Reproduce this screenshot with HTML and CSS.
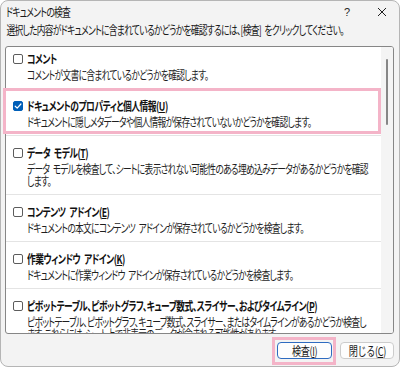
FILE: index.html
```html
<!DOCTYPE html>
<html lang="ja">
<head>
<meta charset="utf-8">
<title>ドキュメントの検査</title>
<link rel="stylesheet" href="styles.css">
</head>
<body>
<div class="window">
  <header class="titlebar">
    <span class="title sq">ドキュメントの検査</span>
    <div class="caption-btns">
      <span class="cap cap-help">?</span>
      <span class="cap cap-close"><svg width="10" height="10" viewBox="0 0 10 10"><path d="M1 1L9 9M9 1L1 9" stroke="#1f1f1f" stroke-width="1" fill="none"/></svg></span>
    </div>
  </header>
  <p class="instruction sq">選択した内容がドキュメントに含まれているかどうかを確認するには、[検査] をクリックしてください。</p>
  <div class="listbox">
    <div class="items">
      <div class="item">
        <div class="head"><span class="cb"></span><span class="label sq">コメント</span></div>
        <div class="desc sq">コメントが文書に含まれているかどうかを確認します。</div>
      </div>
      <div class="item">
        <div class="head"><span class="cb checked"><svg width="10" height="10" viewBox="0 0 10 10"><path d="M2.2 5.2L4.2 7.1L7.9 3" stroke="#fff" stroke-width="1.2" fill="none" stroke-linecap="round" stroke-linejoin="round"/></svg></span><span class="label sq">ドキュメントのプロパティと個人情報(<u>U</u>)</span></div>
        <div class="desc sq">ドキュメントに隠しメタデータや個人情報が保存されていないかどうかを確認します。</div>
      </div>
      <div class="item">
        <div class="head"><span class="cb"></span><span class="label sq">データ モデル(<u>T</u>)</span></div>
        <div class="desc sq">データ モデルを検査して、シートに表示されない可能性のある埋め込みデータがあるかどうかを確認<br>します。</div>
      </div>
      <div class="item">
        <div class="head"><span class="cb"></span><span class="label sq">コンテンツ アドイン(<u>E</u>)</span></div>
        <div class="desc sq">ドキュメントの本文にコンテンツ アドインが保存されているかどうかを検査します。</div>
      </div>
      <div class="item">
        <div class="head"><span class="cb"></span><span class="label sq">作業ウィンドウ アドイン(<u>K</u>)</span></div>
        <div class="desc sq">ドキュメントに作業ウィンドウ アドインが保存されているかどうかを検査します。</div>
      </div>
      <div class="item">
        <div class="head"><span class="cb"></span><span class="label sq">ピボットテーブル、ピボットグラフ、キューブ数式、スライサー、およびタイムライン(<u>P</u>)</span></div>
        <div class="desc sq">ピボットテーブル、ピボットグラフ、キューブ数式、スライサー、またはタイムラインがあるかどうか検査し<br>ます。これらには、シート上で非表示のデータが含まれる可能性があります。</div>
      </div>
    </div>
    <div class="scrollbar"><div class="thumb"></div></div>
  </div>
  <div class="buttons">
    <button class="btn btn-default"><span class="btn-text">検査(<u>I</u>)</span></button>
    <button class="btn"><span class="btn-text">閉じる(<u>C</u>)</span></button>
  </div>
  <div class="mark mark-item"></div>
  <div class="mark mark-btn"></div>
</div>
</body>
</html>
```
FILE: styles.css
```css
* {
  box-sizing: border-box;
  margin: 0;
  padding: 0;
}

html,
body {
  background: #ffffff;
}

body {
  font-family: "Noto Sans CJK JP", sans-serif;
  font-size: 12px;
  color: #1a1a1a;
  font-feature-settings: "palt";
}

.sq {
  transform: scaleX(0.73);
  transform-origin: 0 50%;
  letter-spacing: -1px;
  word-spacing: 3px;
  white-space: nowrap;
}

.window {
  position: relative;
  width: 400px;
  height: 367px;
  background: #f3f3f3;
  border: 1px solid #b5b5b5;
  border-radius: 8px;
  overflow: hidden;
  display: flex;
  flex-direction: column;
  padding: 0 5px 0 4px;
}

.titlebar {
  height: 21px;
  display: flex;
  align-items: center;
  justify-content: space-between;
  padding-left: 1px;
}

.title {
  display: block;
  line-height: 16px;
}

.caption-btns {
  display: flex;
  gap: 11px;
  height: 21px;
}

.cap {
  width: 24px;
  display: flex;
  align-items: center;
  justify-content: center;
  color: #1f1f1f;
}

.cap-help {
  font-family: "Liberation Sans", sans-serif;
  font-size: 11px;
}

.instruction {
  line-height: 16px;
  padding-left: 2px;
}

.listbox {
  margin-top: 8px;
  height: 288px;
  border: 1px solid #868686;
  border-radius: 3px;
  background: #ffffff;
  display: flex;
  overflow: hidden;
}

.items {
  flex: 1;
  margin-top: -5px;
  min-width: 0;
}

.item {
  padding: 8px 0 7px 7px;
  border-top: 1px solid #e4e4e4;
}

.item:first-child {
  border-top: none;
}

.head {
  display: flex;
  align-items: center;
  height: 17px;
}

.cb {
  flex: none;
  width: 10px;
  height: 10px;
  border: 1px solid #5c5c5c;
  border-radius: 2px;
  background: #ffffff;
  margin-right: 4px;
  display: flex;
  align-items: center;
  justify-content: center;
}

.cb.checked {
  background: #005fb8;
  border-color: #005fb8;
}

.cb svg {
  flex: none;
}

.label {
  display: block;
  font-weight: 700;
  line-height: 17px;
  letter-spacing: -0.7px;
  color: #111111;
}

.desc {
  margin: 2px 0 0 14px;
  line-height: 12px;
  color: #1f1f1f;
}

.scrollbar {
  flex: none;
  width: 12px;
  background: #f4f4f4;
  padding: 12px 0 0 5px;
}

.thumb {
  width: 2px;
  height: 66px;
  background: #868686;
  border-radius: 1px;
}

.buttons {
  margin-top: 8px;
  display: flex;
  justify-content: flex-end;
  gap: 8px;
}

.btn {
  height: 17px;
  width: 54px;
  border: 1px solid #cccccc;
  border-radius: 4px;
  background: #fdfdfd;
  font-family: inherit;
  font-size: 12px;
  color: #1a1a1a;
  display: flex;
  align-items: center;
  justify-content: center;
  overflow: visible;
}

.btn-default {
  width: 55px;
  border-color: #2e6bc0;
}

.btn-text {
  display: inline-block;
  line-height: 15px;
  white-space: nowrap;
  letter-spacing: -0.5px;
  transform: scaleX(0.76);
  transform-origin: 50% 50%;
}

.mark {
  position: absolute;
  border: 3px solid #f4b4c8;
  pointer-events: none;
}

.mark-item {
  left: 2px;
  top: 87px;
  width: 378px;
  height: 46px;
}

.mark-btn {
  left: 271px;
  top: 336px;
  width: 64px;
  height: 28px;
}
```
